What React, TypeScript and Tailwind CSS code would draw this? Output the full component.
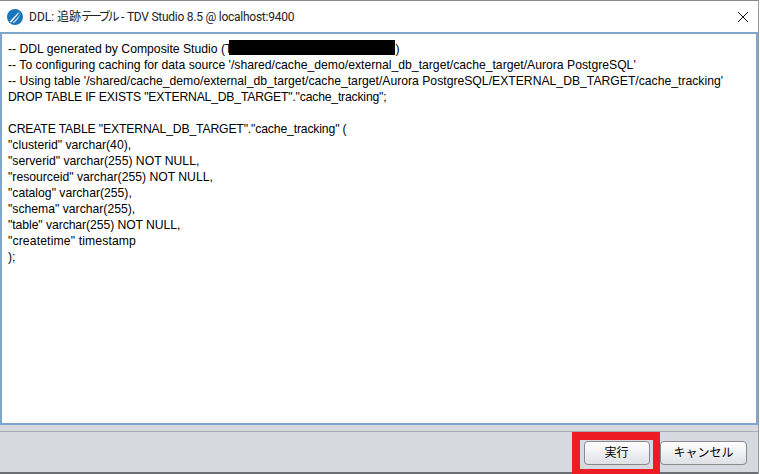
const lines: [string, string][] = [
  [`-- To configuring caching for data source '/shared/cache_demo/external_db_target/cache_target/Aurora PostgreSQL'`, ""],
  [`-- Using table '/shared/cache_demo/external_db_target/cache_target/Aurora PostgreSQL/EXTERNAL_DB_TARGET/cache_tracking'`, ""],
  [`DROP TABLE IF EXISTS "EXTERNAL_DB_TARGET"."cache_tracking";`, "tracking-[-0.19px]"],
  [``, ""],
  [`CREATE TABLE "EXTERNAL_DB_TARGET"."cache_tracking" (`, "tracking-[-0.15px]"],
  [`"clusterid" varchar(40),`, ""],
  [`"serverid" varchar(255) NOT NULL,`, ""],
  [`"resourceid" varchar(255) NOT NULL,`, ""],
  [`"catalog" varchar(255),`, ""],
  [`"schema" varchar(255),`, ""],
  [`"table" varchar(255) NOT NULL,`, "tracking-[-0.07px]"],
  [`"createtime" timestamp`, "tracking-[0.13px]"],
  [`);`, ""],
];

export default function App() {
  return (
    <div className="w-[760px] h-[474px] bg-white overflow-hidden font-['Liberation_Sans','Noto_Sans_CJK_JP',sans-serif]">
      <div className="w-[759px] h-[474px] flex flex-col border-r border-[#9a9a9a]">
        <div className="h-[32px] shrink-0 flex items-center pl-[7px] pr-[9px] pt-[1px] bg-white border-t border-[#888] text-[#222]">
          <svg width="16" height="16" viewBox="0 0 16 16" className="shrink-0">
            <circle cx="8" cy="8" r="8" fill="#1b75bb" />
            <path d="M2.5 13 C6 9 9 5.5 13 2.5 C10.5 6 8 9.5 4 13.5 Z" fill="#fff" />
            <path d="M5.5 13.5 C8 11.5 10.5 9 13.5 5 C12 8.5 10 11.5 7 14 Z" fill="#cfe6f6" />
          </svg>
          <span className="ml-[6px] text-[12px] font-['Roboto','Noto_Sans_CJK_JP',sans-serif]">
            DDL: 追跡<span className="tracking-[-3px]">テーブル</span><span className="ml-[2px] tracking-[-0.25px]"> - TDV Studio 8.5 @ localhost:9400</span>
          </span>
          <svg width="12" height="12" viewBox="0 0 12 12" className="ml-auto">
            <path d="M1 1 L11 11 M11 1 L1 11" stroke="#111" strokeWidth="1" />
          </svg>
        </div>
        <div className="flex-1 flex flex-col bg-[#d6d9e0] border-b-2 border-[#6b6e73]">
          <div className="h-[393px] shrink-0 bg-white border-2 border-[#7fa6cd] pl-[6px] pt-[7px] text-[12.2px] leading-[16px] text-black whitespace-pre">
            <div className="h-[16px]">-- DDL generated by Composite Studio (T<span className="inline-block w-[166px] h-[15px] -mt-[1px] bg-black align-top -ml-[3px]" />)</div>
            {lines.map(([l, c], i) => (
              <div key={i} className={`h-[16px] ${c}`}>{l}</div>
            ))}
          </div>
          <div className="h-[6px] shrink-0" />
          <div className="border-t border-[#a9abb0] flex-1 flex items-stretch justify-end pr-[11px]">
            <div className="bg-[#d6d9e0] border-[#ed1c24] border-t-[8px] border-l-[8px] border-r-[7px] border-b-[5px] -mb-[2px] w-[88px] flex justify-center pt-[1px]">
              <button className="w-[66px] h-[24px] rounded-[4px] border border-[#8a8a8a] bg-gradient-to-b from-white to-[#dfe1e6] text-[12px] text-black">実行</button>
            </div>
            <button className="w-[87px] h-[24px] mt-[9px] rounded-[4px] border border-[#8a8a8a] bg-gradient-to-b from-white to-[#dfe1e6] text-[12px] text-black">キャンセル</button>
          </div>
        </div>
      </div>
    </div>
  );
}
